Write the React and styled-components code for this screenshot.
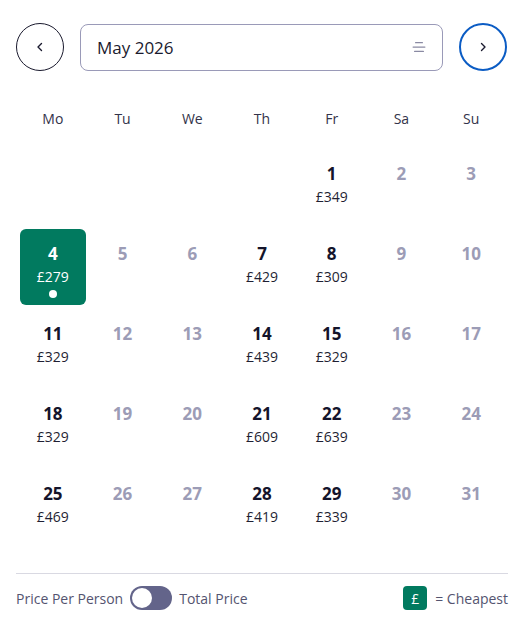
import React from "react";
import styled, { createGlobalStyle } from "styled-components";

const GlobalStyle = createGlobalStyle`
  body {
    margin: 0;
    background: #fff;
    font-family: "Open Sans", "Noto Sans", sans-serif;
    color: #1a1a2e;
  }
`;

const weekdays = ["Mo", "Tu", "We", "Th", "Fr", "Sa", "Su"];

// null = empty slot before the 1st
const days = [
  null, null, null, null,
  { d: 1, p: 349 }, { d: 2 }, { d: 3 },
  { d: 4, p: 279, selected: true }, { d: 5 }, { d: 6 }, { d: 7, p: 429 }, { d: 8, p: 309 }, { d: 9 }, { d: 10 },
  { d: 11, p: 329 }, { d: 12 }, { d: 13 }, { d: 14, p: 439 }, { d: 15, p: 329 }, { d: 16 }, { d: 17 },
  { d: 18, p: 329 }, { d: 19 }, { d: 20 }, { d: 21, p: 609 }, { d: 22, p: 639 }, { d: 23 }, { d: 24 },
  { d: 25, p: 469 }, { d: 26 }, { d: 27 }, { d: 28, p: 419 }, { d: 29, p: 339 }, { d: 30 }, { d: 31 },
];

const Chevron = ({ dir }) => (
  <svg width="12" height="12" viewBox="0 0 12 12" fill="none">
    <path
      d={dir === "left" ? "M7.5 2.5 4 6l3.5 3.5" : "M4.5 2.5 8 6l-3.5 3.5"}
      stroke="#1a1a2e"
      strokeWidth="1.4"
      strokeLinecap="round"
      strokeLinejoin="round"
    />
  </svg>
);

const App = () => {
  return (
    <Page>
      <GlobalStyle />
      <Header>
        <NavButton aria-label="Previous month">
          <Chevron dir="left" />
        </NavButton>
        <MonthSelect>
          <span>May 2026</span>
          <svg width="14" height="12" viewBox="0 0 14 12">
            <rect x="3" y="1" width="8" height="1.3" rx="0.6" fill="#8a8aa3" />
            <rect x="0.5" y="5.4" width="13" height="1.3" rx="0.6" fill="#8a8aa3" />
            <rect x="2" y="9.8" width="10" height="1.3" rx="0.6" fill="#8a8aa3" />
          </svg>
        </MonthSelect>
        <NavButton $active aria-label="Next month">
          <Chevron dir="right" />
        </NavButton>
      </Header>

      <Weekdays>
        {weekdays.map((w) => (
          <span key={w}>{w}</span>
        ))}
      </Weekdays>

      <Grid>
        {days.map((day, i) =>
          day ? (
            <Cell key={i} $selected={day.selected}>
              <DayNum $disabled={!day.p} $selected={day.selected}>
                {day.d}
              </DayNum>
              {day.p && <Price $selected={day.selected}>£{day.p}</Price>}
              {day.selected && <Dot />}
            </Cell>
          ) : (
            <Cell key={i} />
          )
        )}
      </Grid>

      <Footer>
        <ToggleGroup>
          <span>Price Per Person</span>
          <Toggle>
            <Knob />
          </Toggle>
          <span>Total Price</span>
        </ToggleGroup>
        <Legend>
          <Badge>£</Badge>
          <span>= Cheapest</span>
        </Legend>
      </Footer>
    </Page>
  );
};

const Page = styled.div`
  padding: 23px 17px 0 16px;
`;

const Header = styled.div`
  display: flex;
  align-items: center;
  gap: 16px;
  margin-right: 1px;
`;

const NavButton = styled.button`
  width: 48px;
  height: 48px;
  flex-shrink: 0;
  border-radius: 50%;
  background: #fff;
  border: ${(p) => (p.$active ? "2px solid #0b5cc4" : "1px solid #1a1a2e")};
  display: flex;
  align-items: center;
  justify-content: center;
  padding: 0;
  cursor: pointer;
`;

const MonthSelect = styled.div`
  flex: 1;
  height: 47px;
  box-sizing: border-box;
  border: 1px solid #9a9ab8;
  border-radius: 8px;
  display: flex;
  align-items: center;
  justify-content: space-between;
  padding: 0 16px 0 16px;
  font-size: 17px;
  color: #1a1a2e;
`;

const Weekdays = styled.div`
  display: grid;
  grid-template-columns: repeat(7, 1fr);
  gap: 4px;
  padding: 0 4px;
  margin-top: 38px;
  font-size: 14px;
  line-height: 20px;
  color: #33334a;
  text-align: center;
`;

const Grid = styled.div`
  display: grid;
  grid-template-columns: repeat(7, 1fr);
  grid-auto-rows: 76px;
  gap: 4px;
  padding: 0 4px;
  margin-top: 20px;
`;

const Cell = styled.div`
  display: flex;
  flex-direction: column;
  align-items: center;
  padding-top: 14px;
  box-sizing: border-box;
  border-radius: 6px;
  background: ${(p) => (p.$selected ? "#017a5f" : "transparent")};
`;

const DayNum = styled.div`
  font-size: 17px;
  line-height: 22px;
  font-weight: 700;
  color: ${(p) => (p.$selected ? "#fff" : p.$disabled ? "#9c9cb6" : "#14142b")};
`;

const Price = styled.div`
  margin-top: 2px;
  font-size: 14px;
  line-height: 20px;
  color: ${(p) => (p.$selected ? "#fff" : "#1f1f33")};
`;

const Dot = styled.div`
  width: 8px;
  height: 8px;
  border-radius: 50%;
  background: #fff;
  margin-top: 3px;
`;

const Footer = styled.div`
  margin-top: 28px;
  border-top: 1px solid #d9d9e2;
  padding-top: 12px;
  display: flex;
  align-items: center;
  justify-content: space-between;
  font-size: 14px;
  color: #545470;
`;

const ToggleGroup = styled.div`
  display: flex;
  align-items: center;
  gap: 7px;
`;

const Toggle = styled.div`
  width: 42px;
  height: 24px;
  border-radius: 12px;
  background: #63648a;
  position: relative;
`;

const Knob = styled.div`
  position: absolute;
  top: 2px;
  left: 2px;
  width: 20px;
  height: 20px;
  border-radius: 50%;
  background: #fff;
`;

const Legend = styled.div`
  display: flex;
  align-items: center;
  gap: 8px;
`;

const Badge = styled.div`
  width: 24px;
  height: 24px;
  border-radius: 4px;
  background: #017a5f;
  color: #fff;
  display: flex;
  align-items: center;
  justify-content: center;
  font-size: 14px;
`;

export default App;
